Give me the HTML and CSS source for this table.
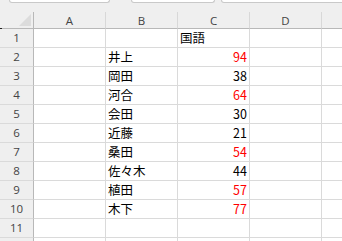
FILE: index.html
```html
<!DOCTYPE html>
<html lang="ja">
<head>
<meta charset="utf-8">
<link rel="stylesheet" href="styles.css">
</head>
<body>
<div class="topbar">
  <div class="tab t1"></div>
  <div class="tab t2"></div>
  <div class="tab t3"></div>
</div>
<div class="mark"></div>
<div class="sheet">
  <div class="corner"><svg width="12" height="12" viewBox="0 0 12 12"><polygon points="12,0 12,12 0,12" fill="#dcdcdc"/></svg></div>
  <div class="ch">A</div><div class="ch">B</div><div class="ch">C</div><div class="ch">D</div><div class="ch last"></div>

  <div class="rh">1</div><div class="c"></div><div class="c"></div><div class="c">国語</div><div class="c"></div><div class="c last"></div>
  <div class="rh">2</div><div class="c"></div><div class="c">井上</div><div class="c num red">94</div><div class="c"></div><div class="c last"></div>
  <div class="rh">3</div><div class="c"></div><div class="c">岡田</div><div class="c num">38</div><div class="c"></div><div class="c last"></div>
  <div class="rh">4</div><div class="c"></div><div class="c">河合</div><div class="c num red">64</div><div class="c"></div><div class="c last"></div>
  <div class="rh">5</div><div class="c"></div><div class="c">会田</div><div class="c num">30</div><div class="c"></div><div class="c last"></div>
  <div class="rh">6</div><div class="c"></div><div class="c">近藤</div><div class="c num">21</div><div class="c"></div><div class="c last"></div>
  <div class="rh">7</div><div class="c"></div><div class="c">桑田</div><div class="c num red">54</div><div class="c"></div><div class="c last"></div>
  <div class="rh">8</div><div class="c"></div><div class="c">佐々木</div><div class="c num">44</div><div class="c"></div><div class="c last"></div>
  <div class="rh">9</div><div class="c"></div><div class="c">植田</div><div class="c num red">57</div><div class="c"></div><div class="c last"></div>
  <div class="rh">10</div><div class="c"></div><div class="c">木下</div><div class="c num red">77</div><div class="c"></div><div class="c last"></div>
  <div class="rh">11</div><div class="c"></div><div class="c"></div><div class="c"></div><div class="c"></div><div class="c last"></div>
  <div class="rh end"></div><div class="c end"></div><div class="c end"></div><div class="c end"></div><div class="c end"></div><div class="c last end"></div>
</div>
</body>
</html>
```

FILE: styles.css
```css
html, body {
  margin: 0;
  padding: 0;
  background: #efefef;
  overflow: hidden;
}
body {
  width: 342px;
  height: 241px;
  position: relative;
}
.topbar {
  height: 12px;
  display: flex;
  align-items: flex-start;
  overflow: hidden;
}
.tab {
  height: 2px;
  background: #ffffff;
  border: 1px solid #c9c9c9;
  border-top: none;
  border-radius: 0 0 4px 4px;
}
.t1 { margin-left: 9px; width: 99px; }
.t2 { margin-left: 21px; width: 82px; }
.t3 { margin-left: 6px; flex: 1; margin-right: -10px; }
.mark {
  position: absolute;
  left: 0;
  top: 28px;
  width: 2px;
  height: 1px;
  background: #222;
}
.sheet {
  display: grid;
  grid-template-columns: 34px 72px 72px 72px 72px 1fr;
  grid-template-rows: 17px repeat(11, 19px) 3px;
  font-family: "Noto Sans CJK JP", "Noto Sans", sans-serif;
}
.corner {
  background: #efefef;
  border-right: 1px solid #b8b8b8;
  border-bottom: 1px solid #b8b8b8;
  display: flex;
  align-items: flex-end;
  justify-content: flex-end;
  padding: 0 2px 2px 0;
}
.corner svg { display: block; }
.ch {
  background: #efefef;
  border-right: 1px solid #d8d8d8;
  border-bottom: 1px solid #b8b8b8;
  font-family: "Open Sans", "Noto Sans", sans-serif;
  font-size: 11.5px;
  color: #444;
  display: flex;
  align-items: center;
  justify-content: center;
  line-height: 1;
  padding-top: 1px;
}
.ch.last { border-right: none; }
.rh {
  background: #efefef;
  border-right: 1px solid #b8b8b8;
  border-bottom: 1px solid #dadada;
  font-family: "Open Sans", "Noto Sans", sans-serif;
  font-size: 11.5px;
  color: #444;
  display: flex;
  align-items: center;
  justify-content: center;
  line-height: 1;
}
.c {
  background: #ffffff;
  border-right: 1px solid #dadada;
  border-bottom: 1px solid #dadada;
  font-size: 12.5px;
  color: #000;
  display: flex;
  align-items: center;
  padding: 0 2px;
  line-height: 1;
  white-space: nowrap;
}
.c.last { border-right: none; }
.end { border-bottom: none; }
.num {
  justify-content: flex-end;
  padding-right: 2px;
}
.red { color: #ff0000; }
```
